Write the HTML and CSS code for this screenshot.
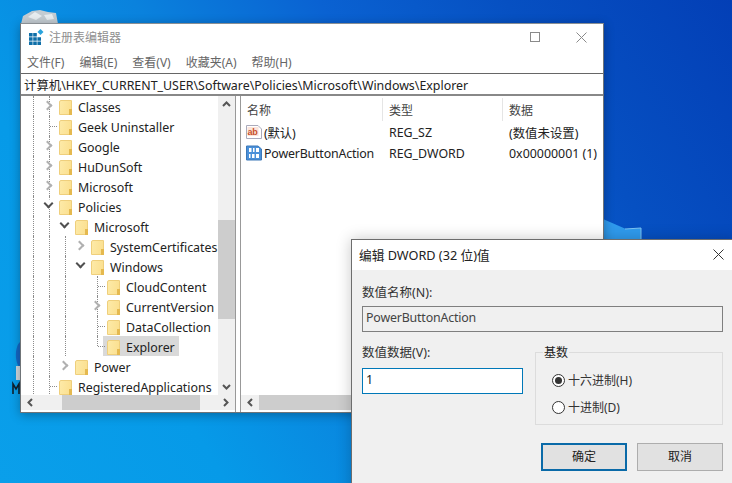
FILE: index.html
```html
<!DOCTYPE html>
<html lang="zh-CN">
<head>
    <meta charset="UTF-8">
    <meta name="viewport" content="width=device-width, initial-scale=1.0">
    <title>注册表编辑器</title>
    <link rel="stylesheet" href="styles.css">
</head>
<body>
    <div class="desktop">
        <!-- bits of the wallpaper and desktop icons that show round the windows -->
        <svg class="bin-icon" width="40" height="16" viewBox="0 0 40 16">
            <path d="M1 16 L3 8 L12 3 L20 2 L28 4 L36 5 L38 16 Z" fill="#c4ccd2"/>
            <path d="M8 9 L15 4 L22 8 L16 12 Z M24 7 L32 6 L34 11 L27 12 Z" fill="#e8edf0"/>
        </svg>
        <svg class="side-icon" width="20" height="60" viewBox="0 0 20 60">
            <path d="M20 6 C15 10 14 26 20 32 Z" fill="#1467c4"/>
            <rect x="16" y="30" width="4" height="14" fill="#cfd8de"/>
            <path d="M13 58 V48 L16 53 L19 48 V58" fill="none" stroke="#10202c" stroke-width="1.6"/>
        </svg>
        <svg class="logo-tile" width="40" height="24" viewBox="0 0 40 24">
            <path d="M0 3 L23 13 L38 12 V24 H0 Z" fill="#2f9bee"/>
            <path d="M22 13 L38 12 V24" fill="none" stroke="#7cc4f4" stroke-width="1"/>
        </svg>

        <div class="regedit">
            <div class="titlebar">
                <svg class="app-icon" width="16" height="16" viewBox="0 0 16 16">
                    <path d="M1 4h3.6v3.6H1zM5.2 4h3.6v3.6H5.2zM1 8.2h3.6v3.6H1zM5.2 8.2h3.6v3.6H5.2zM9.4 8.2H13v3.6H9.4zM1 12.4h3.6V16H1zM5.2 12.4h3.6V16H5.2zM9.4 12.4H13V16H9.4z" fill="#0f6fa8"/>
                    <path d="M12.5 0 L15.5 3 L12.5 6 L9.5 3 Z" fill="#2aa3dc"/>
                </svg>
                <span class="app-title">注册表编辑器</span>
                <div class="win-buttons">
                    <svg width="11" height="11" viewBox="0 0 11 11"><rect x="0.5" y="0.5" width="9" height="9" fill="none" stroke="#8a8a8a"/></svg>
                    <svg width="11" height="11" viewBox="0 0 11 11"><path d="M0.5 0.5 L10.5 10.5 M10.5 0.5 L0.5 10.5" stroke="#8a8a8a" fill="none"/></svg>
                </div>
            </div>
            <div class="menubar">
                <span>文件(F)</span>
                <span>编辑(E)</span>
                <span>查看(V)</span>
                <span>收藏夹(A)</span>
                <span>帮助(H)</span>
            </div>
            <div class="address">计算机\HKEY_CURRENT_USER\Software\Policies\Microsoft\Windows\Explorer</div>

            <div class="panes">
                <div class="tree-pane">
                    <div class="tree-main">
                        <div class="tree">
                            <div class="node"><i class="cell line"></i><i class="cell chev-r line"></i><span class="item"><b class="folder"></b>Classes</span></div>
                            <div class="node"><i class="cell line"></i><i class="cell line stub"></i><span class="item"><b class="folder"></b>Geek Uninstaller</span></div>
                            <div class="node"><i class="cell line"></i><i class="cell chev-r line"></i><span class="item"><b class="folder"></b>Google</span></div>
                            <div class="node"><i class="cell line"></i><i class="cell chev-r line"></i><span class="item"><b class="folder"></b>HuDunSoft</span></div>
                            <div class="node"><i class="cell line"></i><i class="cell chev-r line"></i><span class="item"><b class="folder"></b>Microsoft</span></div>
                            <div class="node"><i class="cell line"></i><i class="cell chev-d line"></i><span class="item"><b class="folder"></b>Policies</span></div>
                            <div class="node"><i class="cell line"></i><i class="cell line"></i><i class="cell chev-d"></i><span class="item"><b class="folder"></b>Microsoft</span></div>
                            <div class="node"><i class="cell line"></i><i class="cell line"></i><i class="cell line"></i><i class="cell chev-r"></i><span class="item"><b class="folder"></b>SystemCertificates</span></div>
                            <div class="node"><i class="cell line"></i><i class="cell line"></i><i class="cell line"></i><i class="cell chev-d"></i><span class="item"><b class="folder"></b>Windows</span></div>
                            <div class="node"><i class="cell line"></i><i class="cell line"></i><i class="cell line"></i><i class="cell"></i><i class="cell line stub"></i><span class="item"><b class="folder"></b>CloudContent</span></div>
                            <div class="node"><i class="cell line"></i><i class="cell line"></i><i class="cell line"></i><i class="cell"></i><i class="cell chev-r line"></i><span class="item"><b class="folder"></b>CurrentVersion</span></div>
                            <div class="node"><i class="cell line"></i><i class="cell line"></i><i class="cell line"></i><i class="cell"></i><i class="cell line stub"></i><span class="item"><b class="folder"></b>DataCollection</span></div>
                            <div class="node"><i class="cell line"></i><i class="cell line"></i><i class="cell line"></i><i class="cell"></i><i class="cell line-end stub"></i><span class="item selected"><b class="folder"></b>Explorer</span></div>
                            <div class="node"><i class="cell line"></i><i class="cell line"></i><i class="cell chev-r"></i><span class="item"><b class="folder"></b>Power</span></div>
                            <div class="node"><i class="cell line"></i><i class="cell line stub"></i><span class="item"><b class="folder"></b>RegisteredApplications</span></div>
                        </div>
                        <div class="vscroll">
                            <svg width="17" height="17" viewBox="0 0 17 17"><path d="M5 10 L8.5 6.5 L12 10" fill="none" stroke="#555" stroke-width="2"/></svg>
                            <div class="vtrack"><div class="vthumb"></div></div>
                            <svg width="17" height="17" viewBox="0 0 17 17"><path d="M5 7 L8.5 10.5 L12 7" fill="none" stroke="#555" stroke-width="2"/></svg>
                        </div>
                    </div>
                    <div class="hscroll">
                        <svg width="17" height="15" viewBox="0 0 17 15"><path d="M11 4 L7.5 7.5 L11 11" fill="none" stroke="#555" stroke-width="2"/></svg>
                        <div class="htrack"><div class="hthumb"></div></div>
                        <svg width="17" height="15" viewBox="0 0 17 15"><path d="M6 4 L9.5 7.5 L6 11" fill="none" stroke="#555" stroke-width="2"/></svg>
                    </div>
                </div>

                <div class="list-pane">
                    <div class="list-head">
                        <span class="col-name">名称</span>
                        <span class="col-type">类型</span>
                        <span class="col-data">数据</span>
                    </div>
                    <div class="list-row">
                        <span class="col-name">
                            <svg class="val-icon" width="16" height="16" viewBox="0 0 16 16">
                                <path d="M0.5 1.5 H12 L15.5 5 V14.5 H0.5 Z" fill="#fff" stroke="#aab"/>
                                <rect x="1.5" y="3" width="11" height="9" fill="#fbe4da"/>
                                <text x="1.5" y="11" class="ab-mark">ab</text>
                            </svg>
                            (默认)
                        </span>
                        <span class="col-type">REG_SZ</span>
                        <span class="col-data">(数值未设置)</span>
                    </div>
                    <div class="list-row">
                        <span class="col-name">
                            <svg class="val-icon" width="16" height="16" viewBox="0 0 16 16">
                                <path d="M0.5 1 H12 L15.5 4 V15 H0.5 Z" fill="#4a90d9" stroke="#3c78b8"/>
                                <path d="M3 3h2.5v4H3zM7 3h1.5v4H7zM10 3h3v4h-3zM3 9h1.5v4H3zM6 9h2.5v4H6zM10 9h3v4h-3z" fill="#fff"/>
                            </svg>
                            PowerButtonAction
                        </span>
                        <span class="col-type">REG_DWORD</span>
                        <span class="col-data">0x00000001 (1)</span>
                    </div>
                    <div class="list-fill"></div>
                    <div class="hscroll">
                        <svg width="17" height="15" viewBox="0 0 17 15"><path d="M11 4 L7.5 7.5 L11 11" fill="none" stroke="#555" stroke-width="2"/></svg>
                        <div class="htrack"><div class="hthumb list-thumb"></div></div>
                    </div>
                </div>
            </div>
        </div>

        <div class="dword-dialog">
            <div class="dialog-title">
                <span>编辑 DWORD (32 位)值</span>
                <svg width="11" height="11" viewBox="0 0 11 11"><path d="M0.5 0.5 L10.5 10.5 M10.5 0.5 L0.5 10.5" stroke="#333" fill="none"/></svg>
            </div>
            <div class="dialog-body">
                <div class="field-label">数值名称(N):</div>
                <div class="name-field">PowerButtonAction</div>
                <div class="value-row">
                    <div class="value-col">
                        <div class="field-label">数值数据(V):</div>
                        <div class="value-input">1</div>
                    </div>
                    <div class="base-group">
                        <span class="base-legend">基数</span>
                        <div class="radio-row"><i class="radio on"></i>十六进制(H)</div>
                        <div class="radio-row"><i class="radio"></i>十进制(D)</div>
                    </div>
                </div>
                <div class="dialog-actions">
                    <div class="btn primary">确定</div>
                    <div class="btn">取消</div>
                </div>
            </div>
        </div>
    </div>
</body>
</html>
```

FILE: styles.css
```css
html, body {
    margin: 0;
    height: 100%;
    overflow: hidden;
}

body {
    font-family: "Noto Sans", "Noto Sans CJK SC", sans-serif;
    font-size: 12.4px;
    color: #222;
}

.desktop {
    position: relative;
    width: 732px;
    height: 483px;
    overflow: hidden;
    background: linear-gradient(238deg, #033fb6 0%, #0650c2 22%, #0a62d2 40%, #0a82dd 58%, #069ae8 78%, #0a9fea 100%);
}

.bin-icon {
    position: absolute;
    left: 20px;
    top: 8px;
}

.side-icon {
    position: absolute;
    left: 0;
    top: 336px;
}

.logo-tile {
    position: absolute;
    left: 603px;
    top: 216px;
}

/* Registry editor window */
.regedit {
    position: absolute;
    left: 20px;
    top: 23px;
    width: 584px;
    height: 390px;
    box-sizing: border-box;
    display: flex;
    flex-direction: column;
    background: #fff;
    border: 1px solid #6f7478;
    border-top-color: #8a8f93;
    box-shadow: 0 2px 10px rgba(0, 0, 0, 0.3);
}

.titlebar {
    height: 26px;
    flex: none;
    display: flex;
    align-items: center;
    padding: 0 0 0 7px;
}

.app-title {
    margin-left: 5px;
    color: #8f8f8f;
    font-size: 12px;
}

.win-buttons {
    margin-left: auto;
    display: flex;
    align-items: center;
    gap: 35px;
    padding-right: 16px;
}

.menubar {
    height: 23px;
    box-sizing: border-box;
    flex: none;
    display: flex;
    align-items: center;
    gap: 15px;
    padding: 1px 0 0 6px;
    font-size: 12px;
    color: #666;
}

.address {
    height: 20px;
    flex: none;
    line-height: 23px;
    padding-left: 3px;
    white-space: nowrap;
    overflow: hidden;
    border-top: 1px solid #666;
    border-bottom: 2px solid #888;
}

.panes {
    flex: 1;
    min-height: 0;
    display: flex;
}

/* Left pane */
.tree-pane {
    width: 214px;
    flex: none;
    display: flex;
    flex-direction: column;
    border-right: 1px solid #999;
}

.tree-main {
    flex: 1;
    min-height: 0;
    display: flex;
}

.tree {
    flex: 1;
    min-width: 0;
    overflow: hidden;
    padding-left: 4px;
}

.node {
    height: 20px;
    display: flex;
    align-items: center;
    white-space: nowrap;
}

.cell {
    position: relative;
    width: 16px;
    height: 20px;
    flex: none;
}

.cell.line::before,
.cell.line-end::before {
    content: "";
    position: absolute;
    left: 8px;
    top: 0;
    bottom: 0;
    border-left: 1px dotted #8c8c8c;
}

.cell.line-end::before {
    bottom: 10px;
}

.cell.stub::after {
    content: "";
    position: absolute;
    left: 9px;
    width: 7px;
    top: 10px;
    border-top: 1px dotted #8c8c8c;
}

.chev-r::after,
.chev-d::after {
    content: "";
    position: absolute;
    width: 5px;
    height: 5px;
    background: #fff;
    box-sizing: content-box;
    border-style: solid;
    border-width: 2px 2px 0 0;
}

.chev-r::after {
    left: 3px;
    top: 6px;
    border-color: #b0b0b0;
    transform: rotate(45deg);
}

.chev-d::after {
    left: 4px;
    top: 4px;
    border-color: #505050;
    transform: rotate(135deg);
}

.item {
    display: flex;
    align-items: center;
    height: 20px;
    box-sizing: border-box;
    margin-left: -2px;
    padding: 2px 4px 0;
}

.item.selected {
    background: #d9d9d9;
}

.folder {
    position: relative;
    width: 13px;
    height: 15px;
    margin-right: 6px;
    box-sizing: border-box;
    background: linear-gradient(100deg, #fdeaa8, #fbdf8e);
    border: 1px solid #efcf7c;
    border-radius: 2px 0 0 0;
}

.folder::after {
    content: "";
    position: absolute;
    right: -1px;
    bottom: -1px;
    width: 3px;
    height: 6px;
    background: #e5b94f;
}

.vscroll {
    width: 17px;
    flex: none;
    display: flex;
    flex-direction: column;
    background: #f0f0f0;
}

.vscroll svg {
    flex: none;
}

.vtrack {
    flex: 1;
    padding-top: 107px;
}

.vthumb {
    height: 99px;
    background: #cdcdcd;
}

.hscroll {
    height: 15px;
    flex: none;
    display: flex;
    margin-bottom: 2px;
    background: #f0f0f0;
}

.hscroll svg {
    flex: none;
}

.htrack {
    flex: 1;
    min-width: 0;
}

.hthumb {
    height: 15px;
    width: 138px;
    margin-left: 24px;
    background: #cdcdcd;
}

.hthumb.list-thumb {
    width: 240px;
    margin-left: 1px;
}

/* Right pane */
.list-pane {
    flex: 1;
    min-width: 0;
    display: flex;
    flex-direction: column;
    margin-left: 4px;
    border-left: 1px solid #999;
}

.list-head,
.list-row {
    display: flex;
    align-items: center;
    white-space: nowrap;
}

.list-head {
    height: 26px;
    box-sizing: border-box;
    padding-top: 1px;
    font-size: 12px;
    color: #444;
}

.list-row {
    height: 21px;
}

.col-name {
    width: 142px;
    padding-left: 6px;
    box-sizing: border-box;
    display: flex;
    align-items: center;
    flex: none;
}

.col-type {
    width: 120px;
    padding-left: 6px;
    box-sizing: border-box;
    flex: none;
}

.col-data {
    padding-left: 6px;
}

.list-head .col-name,
.list-head .col-type {
    height: 23px;
    border-right: 1px solid #e5e5e5;
    display: flex;
    align-items: center;
}

.list-row .col-name {
    padding-left: 5px;
    letter-spacing: -0.18px;
}

.val-icon {
    flex: none;
    margin: 0 2px 2px 0;
}

.ab-mark {
    font-family: "Liberation Sans", sans-serif;
    font-size: 9px;
    font-weight: 700;
    fill: #c8502a;
}

.list-fill {
    flex: 1;
}

/* Edit DWORD dialog */
.dword-dialog {
    position: absolute;
    left: 351px;
    top: 239px;
    width: 386px;
    height: 260px;
    box-sizing: border-box;
    background: #f0f0f0;
    border: 1px solid #6d6d6d;
    box-shadow: 0 0 14px rgba(0, 0, 0, 0.22);
}

.dialog-title {
    height: 30px;
    box-sizing: border-box;
    display: flex;
    align-items: center;
    justify-content: space-between;
    padding: 0 12px 2px 7px;
    background: #fff;
    font-size: 12.7px;
}

.dialog-body {
    padding: 14px 10px 0;
    width: 361px;
}

.field-label {
    height: 18px;
    line-height: 18px;
    font-size: 12.5px;
    color: #333;
}

.name-field {
    height: 26px;
    margin-top: 4px;
    box-sizing: border-box;
    line-height: 22px;
    padding-left: 3px;
    letter-spacing: -0.18px;
    border: 1px solid #7f7f7f;
    color: #444;
}

.value-row {
    display: flex;
    margin-top: 12px;
}

.value-col {
    width: 161px;
    flex: none;
}

.value-input {
    height: 26px;
    margin-top: 6px;
    box-sizing: border-box;
    line-height: 22px;
    padding-left: 3px;
    background: #fff;
    border: 1px solid #0078b8;
}

.base-group {
    position: relative;
    width: 188px;
    height: 73px;
    margin: 8px 0 0 12px;
    box-sizing: border-box;
    padding-top: 13px;
    border: 1px solid #dcdcdc;
}

.base-legend {
    position: absolute;
    left: 7px;
    top: -9px;
    padding: 0 1px;
    background: #f0f0f0;
    font-size: 12px;
    line-height: 18px;
}

.radio-row {
    display: flex;
    align-items: center;
    height: 27px;
    padding-left: 16px;
    font-size: 12px;
    color: #333;
}

.radio {
    position: relative;
    width: 13px;
    height: 13px;
    margin: 1px 3px 0 0;
    box-sizing: border-box;
    background: #fff;
    border: 1px solid #333;
    border-radius: 50%;
}

.radio.on::after {
    content: "";
    position: absolute;
    left: 2px;
    top: 2px;
    width: 7px;
    height: 7px;
    border-radius: 50%;
    background: #333;
}

.dialog-actions {
    display: flex;
    justify-content: flex-end;
    gap: 10px;
    margin-top: 18px;
}

.btn {
    width: 86px;
    height: 28px;
    box-sizing: border-box;
    display: flex;
    align-items: center;
    justify-content: center;
    padding-bottom: 2px;
    background: #e1e1e1;
    border: 1px solid #adadad;
    font-size: 12px;
}

.btn.primary {
    border: 2px solid #0a6aa8;
}
```
